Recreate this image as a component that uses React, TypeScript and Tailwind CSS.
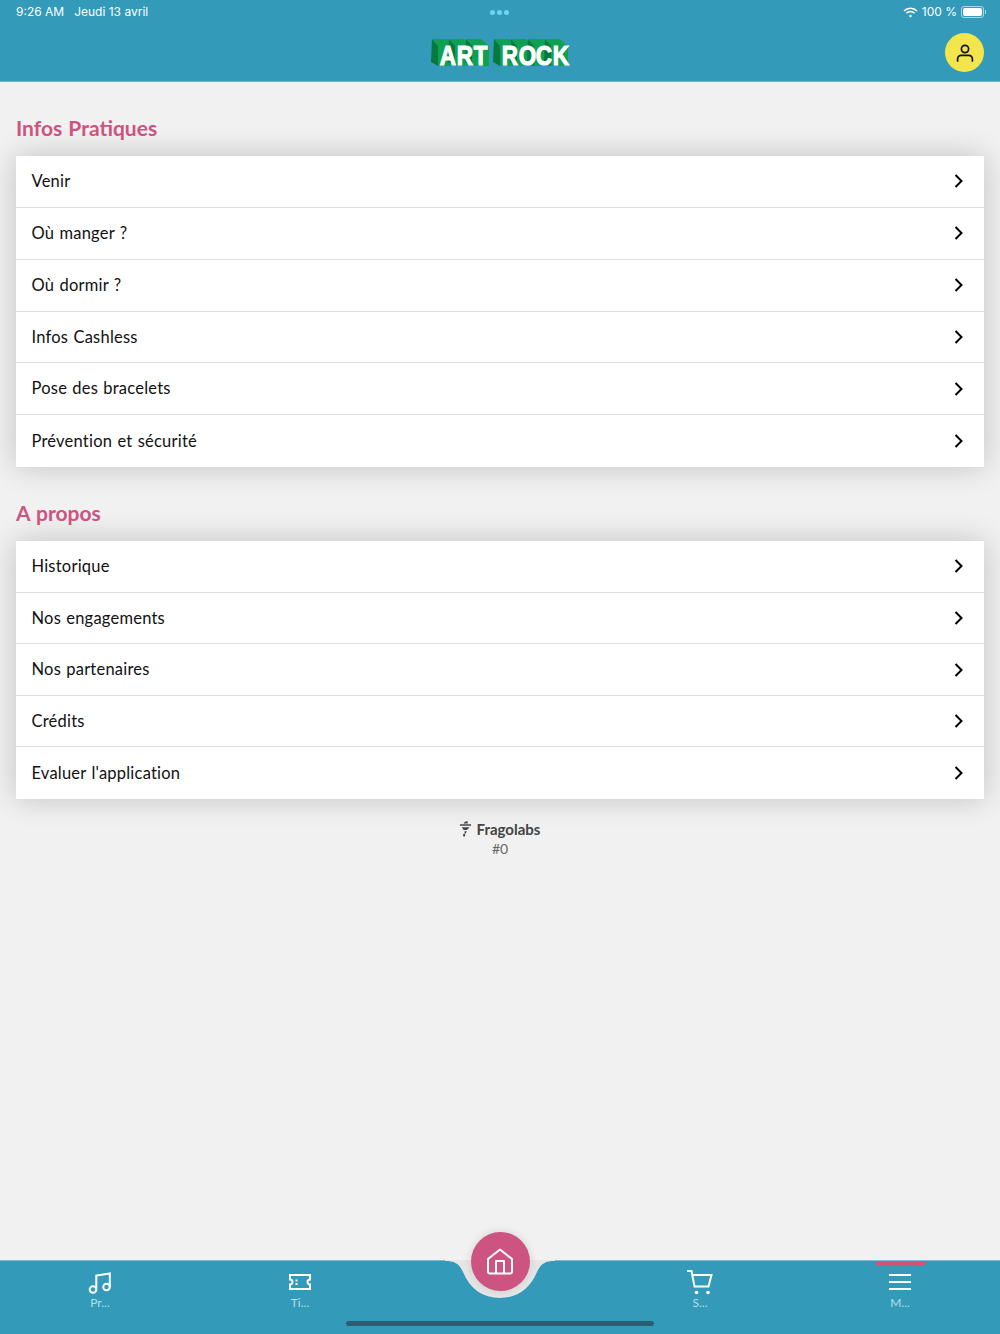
import React from "react";

const infos = ["Venir", "Où manger ?", "Où dormir ?", "Infos Cashless", "Pose des bracelets", "Prévention et sécurité"];
const about = ["Historique", "Nos engagements", "Nos partenaires", "Crédits", "Evaluer l'application"];

const Section = ({ title, rows, rowClass }: { title: string; rows: string[]; rowClass: string }) => (
  <section className="px-4 pt-[33px]">
    <h2 className="mb-[13px] h-[28px] text-[21px] leading-[26px] font-bold text-[#cd5480] [word-spacing:1px]">{title}</h2>
    <ul className="bg-white shadow-[0_0_28px_rgba(0,0,0,0.2)]">
      {rows.map((row, i) => (
        <li
          key={row}
          className={`flex items-center justify-between pr-[20px] pl-[15.5px] text-[16.5px] tracking-[0.22px] text-[#111] [word-spacing:0.8px] ${rowClass} ${
            i < rows.length - 1 ? "border-b border-[#dedede]" : ""
          }`}
        >
          <span>{row}</span>
          <svg width="10" height="14" viewBox="0 0 10 14" fill="none" stroke="black" strokeWidth="2">
            <path d="M1.500 1L7.500 7L1.500 13" />
          </svg>
        </li>
      ))}
    </ul>
  </section>
);

// one letter of the wordmark: real text on a small 3d green block
const LogoLetter = ({ letter }: { letter: string }) => (
  <span className="relative block h-[28px] w-[17px]">
    <svg className="absolute top-0 left-[-7px]" width="26" height="28" viewBox="0 0 26 28">
      <polygon points="1,0 16,0 24,7 7,7" fill="#0fa052" />
      <polygon points="1,0 7,7 7,27 0,23" fill="#067a3e" />
      <rect x="7" y="7" width="17" height="20" fill="#0fa052" />
    </svg>
    <span className="absolute top-[6px] left-0 z-10 w-[17px] scale-x-[0.8] text-center font-['Liberation_Sans'] text-[28px] leading-[22px] font-bold text-white [-webkit-text-stroke:1.2px_white]">
      {letter}
    </span>
  </span>
);

const Tab = ({ label, active, children }: { label: string; active?: boolean; children?: React.ReactNode }) => (
  <div className="relative flex w-[200px] flex-col items-center pt-[8px]">
    {active && <span className="absolute top-[1px] h-[3.500px] w-[49px] bg-[#cd5480]" />}
    <div className="flex h-[26px] items-center justify-center text-white">{children}</div>
    <span className="text-[12px] leading-[16px] text-[#b5dfec]">{label}</span>
  </div>
);

export default function App() {
  return (
    <div className="flex h-[1334px] w-[1000px] flex-col overflow-hidden bg-[#f1f1f1] font-['Lato',sans-serif]">
      <header className="h-[82px] shrink-0 border-b border-[#6fb6cc] bg-[#339ab9] text-white">
        <div className="relative flex h-[24px] items-center justify-between pr-[14px] pl-4 font-['Inter',sans-serif] text-[12px]">
          <div className="flex gap-[10px]">
            <span>9:26 AM</span>
            <span>Jeudi 13 avril</span>
          </div>
          <div className="absolute top-[10px] left-[490px] flex gap-[2px]">
            <span className="size-[5px] rounded-full bg-[#6fd4f2]" />
            <span className="size-[5px] rounded-full bg-[#6fd4f2]" />
            <span className="size-[5px] rounded-full bg-[#6fd4f2]" />
          </div>
          <div className="flex items-center gap-[4px]">
            <svg width="15" height="11" viewBox="0 0 15 11" fill="none" stroke="white" strokeWidth="1.6">
              <path d="M1 4a9 9 0 0 1 13 0" />
              <path d="M3.400 6.300a5.600 5.600 0 0 1 8.200 0" />
              <circle cx="7.500" cy="9" r="1.200" fill="white" stroke="none" />
            </svg>
            <span>100 %</span>
            <div className="flex items-center">
              <div className="h-[12px] w-[23px] rounded-[3px] border border-[#a8d8e6] p-[1px]">
                <div className="h-full w-full rounded-[2px] bg-white" />
              </div>
              <div className="ml-[1px] h-[4px] w-[1px] bg-[#a8d8e6]" />
            </div>
          </div>
        </div>
        <div className="relative flex h-[57px] items-center justify-center">
          <div className="mt-[1px] ml-[6px] flex gap-[11px]">
            <div className="flex">
              <LogoLetter letter="A" />
              <LogoLetter letter="R" />
              <LogoLetter letter="T" />
            </div>
            <div className="flex">
              <LogoLetter letter="R" />
              <LogoLetter letter="O" />
              <LogoLetter letter="C" />
              <LogoLetter letter="K" />
            </div>
          </div>
          <button className="absolute top-[9px] right-[16px] flex size-[39px] items-center justify-center rounded-full bg-[#f3e64c]">
            <svg width="20" height="20" viewBox="0 0 20 20" fill="none" stroke="#111" strokeWidth="1.7" strokeLinecap="round">
              <circle cx="10" cy="6" r="3.600" />
              <path d="M2.600 18v-2a3.600 3.600 0 0 1 3.600-3.600h7.600a3.600 3.600 0 0 1 3.600 3.600v2" />
            </svg>
          </button>
        </div>
      </header>

      <main className="flex-1">
        <Section title="Infos Pratiques" rows={infos} rowClass="h-[51.850px]" />
        <Section title="A propos" rows={about} rowClass="h-[51.600px]" />
        <div className="mt-[20px] flex flex-col items-center">
          <div className="flex h-[20px] items-center gap-[5px] pr-[1px]">
            <svg width="13" height="18" viewBox="0 0 14 18" fill="#444">
              <path d="M6 1.500l3-1 .5 2.500H5zM1 4h12v1.500H1zM3 7h8.500L8.500 10H5zM6 11.500h2.500L7 14H6zM4.500 14.500h2v2.500h-2z" />
            </svg>
            <span className="text-[15px] font-bold text-[#444]">Fragolabs</span>
          </div>
          <span className="text-[14px] leading-[19px] text-[#666]">#0</span>
        </div>
      </main>

      <footer className="relative flex h-[74px] shrink-0 justify-between border-t border-[#7ebdd1] bg-[#339ab9]">
        <Tab label="Pr...">
          <svg width="24" height="23" viewBox="0 0 24 23" fill="none" stroke="white" strokeWidth="2">
            <circle cx="5" cy="18.500" r="3.300" />
            <circle cx="18.500" cy="16" r="3.300" />
            <path d="M8.300 18V4.500L21.800 2.500V16" />
          </svg>
        </Tab>
        <Tab label="Ti...">
          <svg width="22" height="16" viewBox="0 0 22 16" fill="none" stroke="white" strokeWidth="2">
            <path d="M1 1h20v4.500a2.500 2.500 0 0 0 0 5V15H1v-4.500a2.500 2.500 0 0 0 0-5z" />
            <path d="M7.500 5.500V7.500M7.500 9V11" />
          </svg>
        </Tab>
        <div className="w-[200px]" />
        <Tab label="S...">
          <svg width="26" height="25" viewBox="0 0 26 25" fill="none" stroke="white" strokeWidth="2">
            <path d="M0 1h4.500l3 15.500h14l3-11.500H6" />
            <circle cx="9.500" cy="22.500" r="1.800" fill="white" stroke="none" />
            <circle cx="21" cy="22.500" r="1.800" fill="white" stroke="none" />
          </svg>
        </Tab>
        <Tab label="M..." active>
          <svg width="22" height="16" viewBox="0 0 22 16" stroke="white" strokeWidth="2">
            <path d="M0 1h22M0 8h22M0 15h22" />
          </svg>
        </Tab>

        {/* notch cut into the tab bar, behind the home button */}
        <svg className="absolute top-[-1px] left-[445px]" width="110" height="40" viewBox="0 0 110 40">
          <path
            d="M0 0H110V1C101 1 96 3 92 12C85 29 72 38 55 38C38 38 25 29 18 12C14 3 9 1 0 1Z"
            fill="#e6e6e6"
          />
        </svg>
        <button className="absolute top-[-29px] left-[470.500px] flex size-[59px] items-center justify-center rounded-full bg-[#cd5480] shadow-[0_0_10px_rgba(0,0,0,0.12)]">
          <svg width="26" height="27" viewBox="0 0 26 27" fill="none" stroke="white" strokeWidth="2" strokeLinejoin="round">
            <path d="M13 1.500L25 11v12.500a2 2 0 0 1-2 2H3a2 2 0 0 1-2-2V11z" />
            <path d="M9 25.500V13h8v12.500" />
          </svg>
        </button>
        <div className="absolute bottom-[8px] left-[346px] h-[5px] w-[308px] rounded-full bg-[#2a5d70]" />
      </footer>
    </div>
  );
}
